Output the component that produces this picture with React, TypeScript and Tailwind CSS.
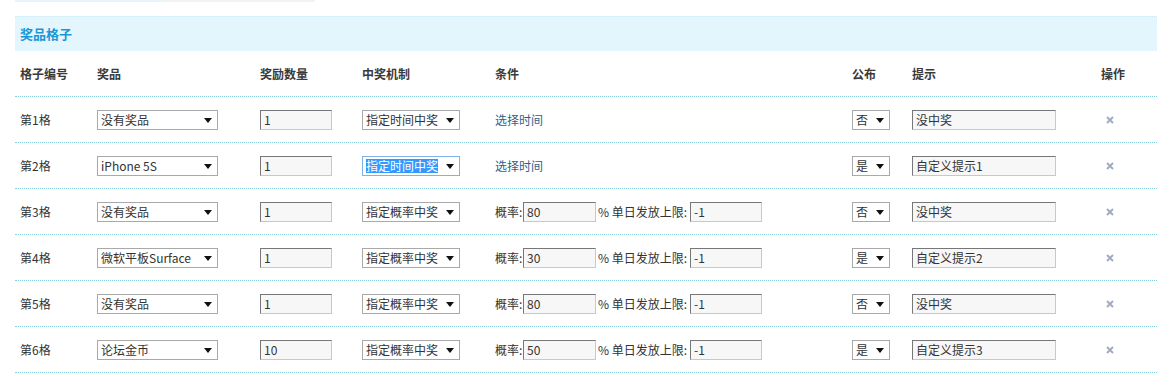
const rows = [
  { no: "第1格", prize: "没有奖品", qty: "1", mode: "指定时间中奖", rate: "", limit: "", pub: "否", tip: "没中奖" },
  { no: "第2格", prize: "iPhone 5S", qty: "1", mode: "指定时间中奖", rate: "", limit: "", pub: "是", tip: "自定义提示1", focus: true },
  { no: "第3格", prize: "没有奖品", qty: "1", mode: "指定概率中奖", rate: "80", limit: "-1", pub: "否", tip: "没中奖" },
  { no: "第4格", prize: "微软平板Surface", qty: "1", mode: "指定概率中奖", rate: "30", limit: "-1", pub: "是", tip: "自定义提示2" },
  { no: "第5格", prize: "没有奖品", qty: "1", mode: "指定概率中奖", rate: "80", limit: "-1", pub: "否", tip: "没中奖" },
  { no: "第6格", prize: "论坛金币", qty: "10", mode: "指定概率中奖", rate: "50", limit: "-1", pub: "是", tip: "自定义提示3" },
];

const cols = "grid grid-cols-[82px_163px_102px_133px_357px_60px_189px_56px] items-center";

function Select({ value, width, focus }: { value: string; width: string; focus?: boolean }) {
  return (
    <div
      className={`relative h-[20px] ${width} border bg-white flex items-center pl-[3px] ${
        focus ? "border-[#7eb4ea]" : "border-[#a9a9a9]"
      }`}
    >
      <span className={focus ? "bg-[#3399ff] text-white leading-[14px]" : ""}>{value}</span>
      <svg className="absolute right-[5px] top-[7px]" width="8" height="5" viewBox="0 0 8 5">
        <path d="M0 0h8L4 5z" fill="#111" />
      </svg>
    </div>
  );
}

function Input({ value, width }: { value: string; width: string }) {
  return (
    <div
      className={`h-[20px] ${width} bg-[#f7f7f7] border border-t-[#777] border-l-[#777] border-r-[#c8c8c8] border-b-[#c8c8c8] flex items-center pl-[3px]`}
    >
      {value}
    </div>
  );
}

export default function App() {
  return (
    <div
      className="w-[1157px] h-[378px] bg-white text-[12px] text-[#333]"
      style={{ fontFamily: '"Noto Sans CJK SC", "Liberation Sans", sans-serif' }}
    >
      {/* top tab strip */}
      <div className="flex pl-[15px] h-[2px]">
        <div className="w-[150px] bg-[#e9f5fc]" />
        <div className="w-[150px] bg-[#f3f3f3]" />
      </div>

      <div className="ml-[15px] mt-[14px]">
        {/* section bar */}
        <div className="h-[35px] bg-[#e3f5fd] border-t border-dotted border-[#cfe9f5] flex items-center pl-[5px]">
          <span className="font-bold text-[#1a97d5] text-[13px]">奖品格子</span>
        </div>

        {/* header */}
        <div className={`${cols} h-[46px] border-b border-dotted border-[#86cddf] font-bold text-[#3a3a3a]`}>
          <div className="pl-[5px]">格子编号</div>
          <div>奖品</div>
          <div>奖励数量</div>
          <div>中奖机制</div>
          <div>条件</div>
          <div>公布</div>
          <div>提示</div>
          <div>操作</div>
        </div>

        {rows.map((r) => (
          <div key={r.no} className={`${cols} h-[46px] border-b border-dotted border-[#86cddf]`}>
            <div className="pl-[5px]">{r.no}</div>
            <div>
              <Select value={r.prize} width="w-[121px]" />
            </div>
            <div>
              <Input value={r.qty} width="w-[72px]" />
            </div>
            <div>
              <Select value={r.mode} width="w-[98px]" focus={r.focus} />
            </div>
            <div>
              {r.rate ? (
                <div className="flex items-center">
                  <span className="w-[28px]">概率:</span>
                  <Input value={r.rate} width="w-[73px]" />
                  <span className="w-[94px] pl-[2px]">% 单日发放上限:</span>
                  <Input value={r.limit} width="w-[72px]" />
                </div>
              ) : (
                <span className="text-[#2f5f8f]">选择时间</span>
              )}
            </div>
            <div>
              <Select value={r.pub} width="w-[38px]" />
            </div>
            <div>
              <Input value={r.tip} width="w-[144px]" />
            </div>
            <div className="pl-[5px]">
              <svg width="8" height="8" viewBox="0 0 8 8">
                <path d="M1 1l6 6M7 1L1 7" stroke="#a3abc2" strokeWidth="2" />
              </svg>
            </div>
          </div>
        ))}
      </div>
    </div>
  );
}
